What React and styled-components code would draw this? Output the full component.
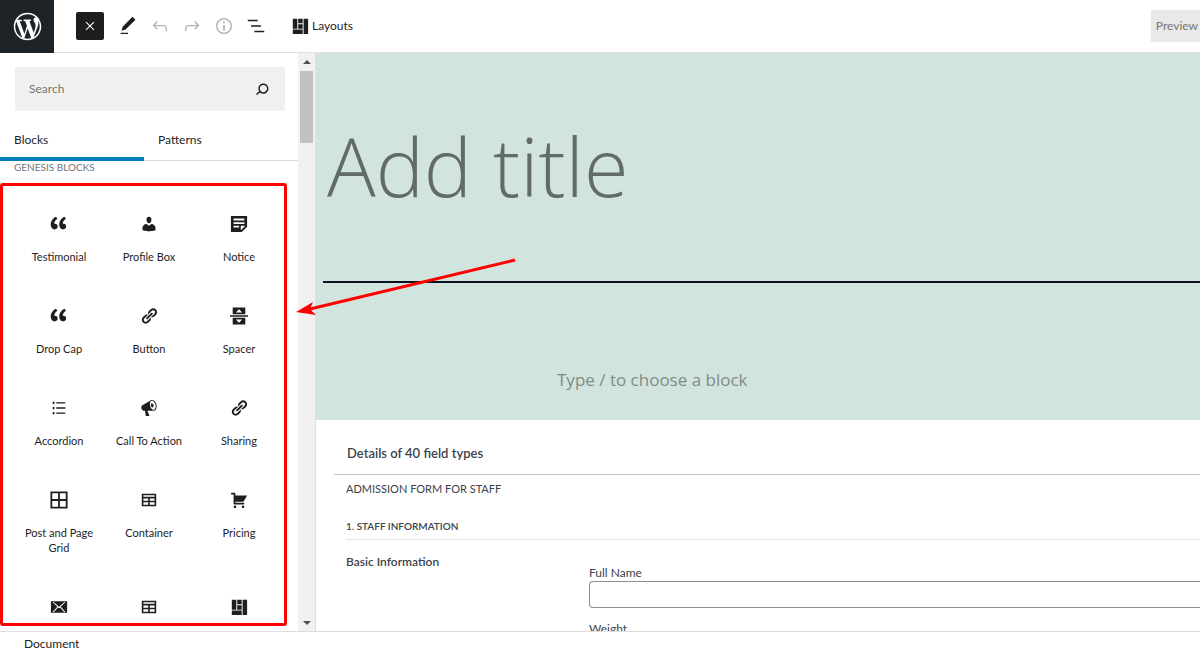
import styled, { createGlobalStyle } from "styled-components";
import { useState } from "react";

const paths = {
  wordpress:
    "M20 10c0-5.51-4.49-10-10-10C4.48 0 0 4.49 0 10c0 5.52 4.48 10 10 10 5.51 0 10-4.48 10-10zM7.78 15.37L4.37 6.22c.55-.02 1.17-.08 1.17-.08.5-.06.44-1.13-.06-1.11 0 0-1.45.11-2.37.11-.18 0-.37 0-.58-.01C4.12 2.69 6.87 1.11 10 1.11c2.33 0 4.45.87 6.05 2.34-.68-.11-1.65.39-1.65 1.58 0 .74.45 1.36.9 2.1.35.61.55 1.36.55 2.46 0 1.49-1.4 5-1.4 5l-3.03-8.37c.54-.02.82-.17.82-.17.5-.05.44-1.25-.06-1.22 0 0-1.44.12-2.38.12-.87 0-2.33-.12-2.33-.12-.5-.03-.56 1.2-.06 1.22l.92.08 1.26 3.41zM17.41 10c.24-.64.74-1.87.43-4.25.7 1.29 1.05 2.71 1.05 4.25 0 3.29-1.73 6.24-4.4 7.78.97-2.59 1.94-5.2 2.92-7.78zM6.1 18.09C3.12 16.65 1.11 13.53 1.11 10c0-1.3.23-2.48.72-3.59C3.25 10.3 4.67 14.2 6.1 18.09zm4.03-6.63l2.58 6.98c-.86.29-1.76.45-2.71.45-.79 0-1.57-.11-2.29-.33.81-2.38 1.62-4.74 2.42-7.1z",
  close: "M7.2 6.2l4.8 4.8 4.8-4.8 1 1-4.8 4.8 4.8 4.8-1 1-4.8-4.8-4.8 4.8-1-1 4.8-4.8-4.8-4.8z",
  edit: "M20.1 5.1L16.9 2 6.2 12.7l-1.3 4.4 4.5-1.3L20.1 5.1zM4 20.8h8v-1.5H4v1.5z",
  undo: "M18.3 11.7c-.6-.6-1.4-.9-2.3-.9H6.7l2.9-3.3-1.1-1-4.5 5L8.5 16l1-1-2.7-2.7H16c.5 0 .9.2 1.3.5 1 1 1 3.4 1 4.5v.3h1.5v-.2c0-1.5 0-4.3-1.5-5.7z",
  redo: "M15.6 6.5l-1.1 1 2.9 3.3H8c-.9 0-1.7.3-2.3.9-1.4 1.5-1.4 4.2-1.4 5.6v.2h1.5v-.3c0-1.1 0-3.5 1-4.5.3-.3.7-.5 1.3-.5h9.2L14.5 15l1.1 1.1 4.6-4.6-4.6-5z",
  info: "M12 3.2c-4.8 0-8.8 3.9-8.8 8.8 0 4.8 3.9 8.8 8.8 8.8 4.8 0 8.8-3.9 8.8-8.8 0-4.8-4-8.8-8.8-8.8zm0 16c-4 0-7.2-3.3-7.2-7.2C4.8 8 8 4.8 12 4.8s7.2 3.3 7.2 7.2c0 4-3.2 7.2-7.2 7.2zM11 17h2v-6h-2v6zm0-8h2V7h-2v2z",
  outline: "M13.8 5.2H3v1.5h10.8V5.2zm-3.6 12v1.5H21v-1.5H10.2zm7.2-6H6.6v1.5h10.8v-1.5z",
  search:
    "M13.5 6C10.5 6 8 8.5 8 11.5c0 1.1.3 2.1.9 3l-3.4 3 1 1.1 3.4-2.9c1 .9 2.2 1.4 3.6 1.4 3 0 5.5-2.5 5.5-5.5C19 8.5 16.5 6 13.5 6zm0 9.5c-2.2 0-4-1.8-4-4s1.8-4 4-4 4 1.8 4 4-1.8 4-4 4z",
  layout: "M2 2h5v11H2V2zm6 0h5v5H8V2zm6 0h5v17h-5V2zM8 8h5v5H8V8zm-6 6h11v5H2v-5z",
  quote:
    "M8.54 12.74c0-.87-.24-1.61-.72-2.22-.73-.92-2.14-1.03-2.96-.85-.34-1.93 1.3-4.39 3.42-5.45L6.65 1.94C3.45 3.46.31 6.96.85 11.37 1.19 14.16 2.8 16 5.08 16c1 0 1.83-.29 2.48-.88.66-.59.98-1.38.98-2.38zm9.43 0c0-.87-.24-1.61-.72-2.22-.73-.92-2.14-1.03-2.96-.85-.34-1.93 1.3-4.39 3.42-5.45l-1.63-2.28c-3.2 1.52-6.34 5.02-5.8 9.43.34 2.79 1.95 4.63 4.23 4.63 1 0 1.83-.29 2.48-.88.66-.59.98-1.38.98-2.38z",
  user: "M10 9.25c-2.27 0-2.73-3.44-2.73-3.44C7 4.02 7.82 2 9.97 2c2.16 0 2.98 2.02 2.71 3.81 0 0-.41 3.44-2.68 3.44zm0 2.57L12.72 10c2.39 0 4.52 2.33 4.52 4.53v2.49s-3.65 1.13-7.24 1.13c-3.65 0-7.24-1.13-7.24-1.13v-2.49c0-2.25 1.94-4.48 4.47-4.48z",
  notice: "M1 1h18v12l-6 6H1V1zm3 3v2h12V4H4zm0 4v2h12V8H4zm0 4v2h6v-2H4zm8 5l5-5h-5v5z",
  link: "M17.74 2.76c1.68 1.69 1.68 4.41 0 6.1l-1.53 1.52c-1.12 1.12-2.7 1.47-4.14 1.09l2.62-2.61.76-.77.76-.76c.84-.84.84-2.2 0-3.04-.84-.85-2.2-.85-3.04 0l-.77.76-3.38 3.38c-.37-1.44-.02-3.02 1.1-4.14l1.52-1.53c1.69-1.68 4.42-1.68 6.1 0zM8.59 13.43l5.34-5.34c.42-.42.42-1.1 0-1.52-.44-.43-1.13-.39-1.53 0l-5.33 5.34c-.42.42-.42 1.1 0 1.52.44.43 1.13.39 1.52 0zm-.76 2.29l4.14-4.15c.38 1.44.03 3.02-1.09 4.14l-1.52 1.53c-1.69 1.68-4.41 1.68-6.1 0-1.68-1.68-1.68-4.42 0-6.1l1.53-1.52c1.12-1.12 2.7-1.47 4.14-1.1l-4.14 4.15c-.85.84-.85 2.2 0 3.05.84.84 2.2.84 3.04 0z",
  spacer: "M3 .5h14V8H3V.5zm7 2L6.500 6h7L10 2.500zM0 9.200h20v1.600H0V9.200zM3 12h14v7.500H3V12zm7 5.500l3.500-3.500h-7l3.500 3.500z",
  list: "M3 3h2v2.500H3V3zm4 .6h10v1.300H7V3.600zM3 8.800h2v2.500H3V8.800zm4 .5h10v1.400H7V9.300zM3 14.500h2V17H3v-2.500zm4 .6h10v1.300H7v-1.300z",
  megaphone:
    "M18.15 5.94c.46 1.62.38 3.22-.02 4.48-.42 1.28-1.26 2.18-2.3 2.48-.16.06-.26.06-.4.06-.06.02-.12.02-.18.02-.06.02-.14.02-.22.02h-6.8l2.22 5.5c.02.14-.06.26-.14.34-.08.1-.24.16-.34.16H6.95c-.1 0-.26-.06-.34-.16-.08-.08-.16-.2-.14-.34l-1-5.5H4.25l-.02-.02c-.5.06-1.08-.18-1.54-.62s-.88-1.08-1.06-1.88c-.24-.8-.2-1.56-.02-2.2.18-.62.58-1.08 1.06-1.3l.02-.02 9-5.4c.1-.06.18-.1.24-.16.06-.04.14-.08.24-.12.16-.08.28-.12.5-.18 1.04-.3 2.24.1 3.22.98s1.84 2.24 2.26 3.86zm-2.58 5.98h-.02c.4-.1.74-.34 1.04-.7.58-.7.86-1.76.86-3.04 0-.64-.1-1.3-.28-1.98-.34-1.36-1.02-2.5-1.78-3.24s-1.68-1.1-2.46-.88c-.82.22-1.4.96-1.7 2-.32 1.04-.28 2.36.06 3.72.38 1.36 1 2.5 1.8 3.24.78.74 1.62 1.1 2.48.88zm-2.54-7.08c.22-.04.42-.02.62.04.38.16.76.48 1.02 1s.42 1.2.42 1.78c0 .3-.04.56-.12.8-.18.48-.44.84-.86.94-.34.1-.8-.06-1.14-.4s-.64-.86-.78-1.5c-.18-.62-.12-1.24.02-1.72s.48-.84.82-.94z",
  grid: "M.5.500h19v19H.5V.500zm2 2v6.500H9V2.500H2.500zm8.500 0v6.500h6.500V2.500H11zM2.500 11v6.500H9V11H2.500zm8.500 0v6.500h6.500V11H11z",
  table: "M2 3h16v14H2V3zm1.800 1.800v1.700h12.400V4.800H3.800zm0 3.500v2.500h5.300V8.300H3.800zm7.100 0v2.500h5.300V8.300h-5.300zm-7.100 4.300v2.600h5.300v-2.600H3.800zm7.100 0v2.600h5.300v-2.600h-5.300z",
  cart: "M6 13h9c.55 0 1 .45 1 1s-.45 1-1 1H5c-.55 0-1-.45-1-1V4H2c-.55 0-1-.45-1-1s.45-1 1-1h3c.55 0 1 .45 1 1v2h13l-4 7H6v1zm-.5 3c.83 0 1.5.67 1.5 1.5S6.33 19 5.5 19 4 18.33 4 17.5 4.67 16 5.5 16zm9 0c.83 0 1.5.67 1.5 1.5s-.67 1.5-1.5 1.5-1.5-.67-1.5-1.5.67-1.5 1.5-1.5z",
  email:
    "M1.500 3.500h17c.3 0 .5.2.5.5v12c0 .3-.2.5-.5.5h-17c-.3 0-.5-.2-.5-.5V4c0-.3.200-.5.500-.5zM3 4.800l5.200 5L3 15.200l1 .6 5-5.200 1 .8 1-.8 5 5.200 1-.6-5.200-5.400 5.200-5-1-.3-6 5.300-6-5.300-1 .3z",
};

const boxes = {
  wordpress: "-2 -2 24 24",
  close: "0 0 24 24",
  edit: "0 0 24 24",
  undo: "0 0 24 24",
  redo: "0 0 24 24",
  info: "0 0 24 24",
  outline: "0 0 24 24",
  search: "0 0 24 24",
};

function Icon({ name, size }) {
  return (
    <svg width={size} height={size} viewBox={boxes[name] || "0 0 20 20"} fill="currentColor" fillRule="evenodd" aria-hidden="true">
      <path d={paths[name]} />
    </svg>
  );
}

const tools = [
  { name: "edit", label: "Tools" },
  { name: "undo", label: "Undo", disabled: true },
  { name: "redo", label: "Redo", disabled: true },
  { name: "info", label: "Details", disabled: true },
  { name: "outline", label: "Outline" },
];

const blocks = [
  { label: "Testimonial", icon: "quote" },
  { label: "Profile Box", icon: "user" },
  { label: "Notice", icon: "notice" },
  { label: "Drop Cap", icon: "quote" },
  { label: "Button", icon: "link" },
  { label: "Spacer", icon: "spacer" },
  { label: "Accordion", icon: "list" },
  { label: "Call To Action", icon: "megaphone" },
  { label: "Sharing", icon: "link" },
  { label: "Post and Page Grid", icon: "grid" },
  { label: "Container", icon: "table" },
  { label: "Pricing", icon: "cart" },
  { icon: "email" },
  { icon: "table" },
  { icon: "layout" },
];

export default function App() {
  const [tab, setTab] = useState("Blocks");

  return (
    <Page>
      <GlobalStyle />
      <Header>
        <Logo href="#" aria-label="WordPress">
          <Icon name="wordpress" size={33} />
        </Logo>
        <Inserter aria-label="Close block inserter">
          <Icon name="close" size={18} />
        </Inserter>
        <Tools>
          {tools.map(({ name, label, disabled }) => (
            <Tool key={name} aria-label={label} disabled={disabled}>
              <Icon name={name} size={22} />
            </Tool>
          ))}
        </Tools>
        <LayoutsButton>
          <Icon name="layout" size={18} />
          Layouts
        </LayoutsButton>
        <Preview>Preview</Preview>
      </Header>

      <Body>
        <Sidebar>
          <Library>
            <SearchBox>
              <input placeholder="Search" aria-label="Search" />
              <Icon name="search" size={22} />
            </SearchBox>
            <Tabs role="tablist">
              {["Blocks", "Patterns"].map((name) => (
                <Tab key={name} role="tab" aria-selected={tab === name} $active={tab === name} onClick={() => setTab(name)}>
                  {name}
                </Tab>
              ))}
            </Tabs>
            <Category>GENESIS BLOCKS</Category>
            <BlockGrid>
              {blocks.map(({ label, icon }, i) => (
                <Block key={i} aria-label={label || icon}>
                  <Icon name={icon} size={18} />
                  {label && <span>{label}</span>}
                </Block>
              ))}
            </BlockGrid>
            <Highlight />
          </Library>
          <Scrollbar>
            <ScrollArrow />
            <Thumb />
            <ScrollArrow $down />
          </Scrollbar>
          <Arrow width="222" height="60" viewBox="0 0 222 60" aria-hidden="true">
            <path d="M219 3L14 52" stroke="#f00" strokeWidth="3" />
            <path d="M0 55L17 45l-3 7 6 6z" fill="#f00" />
          </Arrow>
        </Sidebar>

        <Editor>
          <Canvas>
            <Title placeholder="Add title" aria-label="Add title" />
            <Paragraph placeholder="Type / to choose a block" aria-label="Block" />
          </Canvas>
          <MetaBox>
            <h2>Details of 40 field types</h2>
            <Form>
              <FormTitle>ADMISSION FORM FOR STAFF</FormTitle>
              <Section>1. STAFF INFORMATION</Section>
              <Fields>
                <h4>Basic Information</h4>
                <div>
                  <label htmlFor="name">Full Name</label>
                  <input id="name" />
                  <label htmlFor="weight">Weight</label>
                  <input id="weight" />
                </div>
              </Fields>
            </Form>
          </MetaBox>
        </Editor>
      </Body>

      <Footer>Document</Footer>
    </Page>
  );
}

const GlobalStyle = createGlobalStyle`
  * {
    box-sizing: border-box;
  }
  body {
    margin: 0;
    color: #1e1e1e;
    background: #fff;
    font: 12px/16px Lato, "Open Sans", sans-serif;
  }
  button,
  input {
    font: inherit;
    color: inherit;
    padding: 0;
    border: 0;
    background: none;
  }
  h2, h3, h4 {
    margin: 0;
  }
  svg {
    display: block;
    flex: none;
  }
`;

const Page = styled.div`
  display: flex;
  flex-direction: column;
  height: 100vh;
  overflow: hidden;
`;

const Header = styled.header`
  display: flex;
  align-items: center;
  height: 53px;
  flex: none;
  border-bottom: 1px solid #e0e0e0;
`;

const Logo = styled.a`
  display: grid;
  place-items: center;
  width: 54px;
  height: 53px;
  align-self: flex-start;
  color: #fff;
  background: #1d2327;
`;

const Inserter = styled.button`
  display: grid;
  place-items: center;
  width: 28px;
  height: 28px;
  margin: 0 8px 0 22px;
  border-radius: 2px;
  color: #fff;
  background: #1e1e1e;
`;

const Tools = styled.div`
  display: flex;
`;

const Tool = styled.button`
  display: grid;
  place-items: center;
  width: 32px;
  height: 32px;
  &:disabled {
    color: #b5b5b5;
  }
`;

const LayoutsButton = styled.button`
  display: flex;
  align-items: center;
  gap: 3px;
  margin-left: 19px;
`;

const Preview = styled.button`
  margin-left: auto;
  height: 32px;
  padding: 0 2px 0 5px;
  color: #757575;
  background: #e9e9e9;
`;

const Body = styled.div`
  display: flex;
  flex: 1;
  min-height: 0;
`;

const Sidebar = styled.aside`
  position: relative;
  display: flex;
  width: 316px;
  flex: none;
  border-right: 1px solid #e0e0e0;
`;

const Library = styled.div`
  position: relative;
  flex: 1;
  overflow: hidden;
`;

const SearchBox = styled.div`
  display: flex;
  align-items: center;
  height: 44px;
  margin: 14px 13px 0 15px;
  padding: 0 12px 0 14px;
  border-radius: 2px;
  background: #f0f0f0;
  input {
    flex: 1;
    min-width: 0;
    outline: 0;
  }
  input::placeholder {
    color: #757575;
    opacity: 1;
  }
`;

const Tabs = styled.div`
  display: flex;
  height: 50px;
  border-bottom: 1px solid #ddd;
`;

const Tab = styled.button`
  width: 144px;
  height: 50px;
  padding: 12px 14px 0;
  text-align: left;
  border-bottom: 4px solid ${(props) => (props.$active ? "#007cba" : "transparent")};
`;

const Category = styled.h2`
  margin: 0 14px;
  color: #757575;
  font-size: 10px;
  font-weight: 400;
  line-height: 13px;
`;

const BlockGrid = styled.div`
  display: grid;
  grid-template-columns: repeat(3, 1fr);
  padding: 26px 14px 0;
`;

const Block = styled.button`
  display: flex;
  flex-direction: column;
  align-items: center;
  gap: 16px;
  padding: 15px 0 28px;
  font-size: 11px;
  line-height: 15px;
`;

const Highlight = styled.div`
  position: absolute;
  inset: 130px 11px 5px 0;
  border: 3px solid #f00;
  border-radius: 3px;
`;

const Scrollbar = styled.div`
  display: flex;
  flex-direction: column;
  align-items: center;
  width: 17px;
  background: #f1f1f1;
`;

const ScrollArrow = styled.span`
  margin: ${(props) => (props.$down ? "auto 0 6px" : "7px 0")};
  border: 4px solid transparent;
  border-top: ${(props) => (props.$down ? "4px solid #505050" : "0")};
  border-bottom: ${(props) => (props.$down ? "0" : "4px solid #505050")};
`;

const Thumb = styled.span`
  width: 13px;
  height: 72px;
  background: #c1c1c1;
`;

const Arrow = styled.svg`
  position: absolute;
  z-index: 1;
  top: 204px;
  left: 296px;
  fill: none;
`;

const Editor = styled.main`
  flex: 1;
  min-width: 0;
  overflow: hidden;
`;

const Canvas = styled.div`
  display: flex;
  flex-direction: column;
  height: 367px;
  padding-left: 7px;
  color: #28303d;
  background: #d1e4dd;
  font-family: "Open Sans", sans-serif;
  input {
    outline: 0;
  }
`;

const Title = styled.input`
  height: 230px;
  padding: 0 4px 4px;
  border-bottom: 2px solid #0c1020;
  font-size: 81px;
  font-weight: 300;
  &::placeholder {
    color: #636b69;
    opacity: 1;
  }
`;

const Paragraph = styled.input`
  width: 400px;
  max-width: 100%;
  margin: 84px auto 0 234px;
  font-size: 17px;
  line-height: 26px;
  &::placeholder {
    color: #7f8c88;
    opacity: 1;
  }
`;

const MetaBox = styled.section`
  h2 {
    height: 55px;
    margin-left: 18px;
    padding: 23px 13px 0;
    border-bottom: 1px solid #c3c4c7;
    color: #3c434a;
    font-size: 13px;
    font-weight: 600;
    line-height: 20px;
  }
`;

const Form = styled.form`
  padding: 6px 0 0 30px;
  color: #3c434a;
`;

const FormTitle = styled.div`
  margin-bottom: 21px;
  font-size: 11px;
`;

const Section = styled.h3`
  padding-bottom: 5px;
  border-bottom: 1px solid #e5e5e5;
  font-size: 10px;
  font-weight: 600;
  line-height: 16px;
`;

const Fields = styled.div`
  display: grid;
  grid-template-columns: 243px 1fr;
  padding-top: 14px;
  h4 {
    font-size: 12px;
    font-weight: 600;
  }
  label {
    display: block;
    margin-top: 11px;
    line-height: 16px;
  }
  input {
    display: block;
    width: 100%;
    height: 27px;
    margin-bottom: 13px;
    border: 1px solid #8c8f94;
    border-right: 0;
    border-radius: 4px 0 0 4px;
    background: #fff;
  }
`;

const Footer = styled.footer`
  height: 21px;
  flex: none;
  padding: 4px 24px 0;
  border-top: 1px solid #ddd;
`;
